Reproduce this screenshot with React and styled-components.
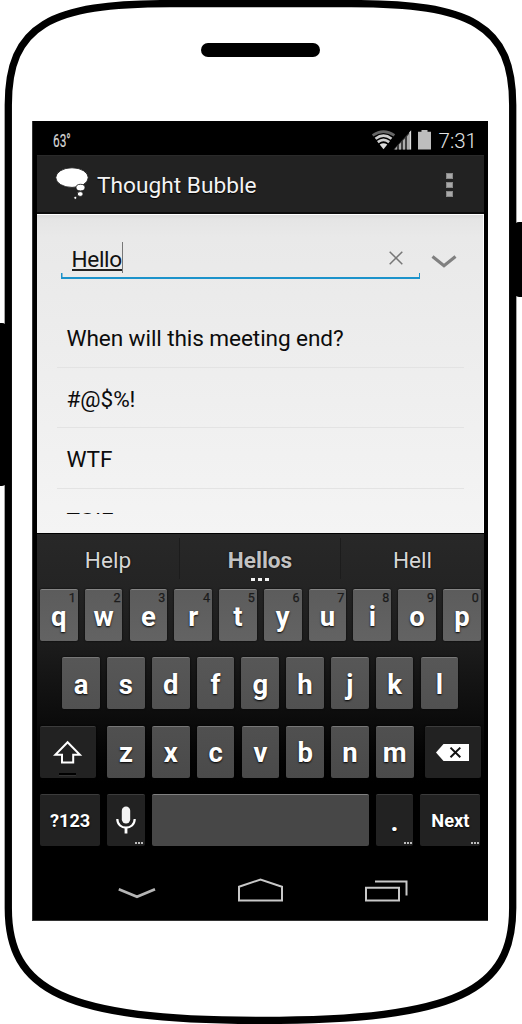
import React from "react";
import styled, { createGlobalStyle, css } from "styled-components";

const GlobalStyle = createGlobalStyle`
  * { box-sizing: border-box; }
  body { margin: 0; background: #fff; font-family: Roboto, "Liberation Sans", sans-serif; }
  svg { display: block; }
`;

const Phone = styled.main`
  position: relative;
  width: 522px;
  height: 1024px;
  padding: 121px 34px 0 32px;
  overflow: hidden;
`;

const Casing = styled.svg`
  position: absolute;
  inset: 0;
`;

const Screen = styled.section`
  position: relative;
  display: flex;
  flex-direction: column;
  height: 800px;
  padding: 1px 4px 0 4px;
  background: #000;
  border: solid #333;
  border-width: 0 0 1px 1px;
`;

const StatusBar = styled.header`
  display: flex;
  align-items: center;
  height: 33px;
  padding: 4px 8px 0 16px;
  color: #d6d6d6;
`;

const Temperature = styled.span`
  flex: 1;
  font-size: 18.5px;
  line-height: 20px;
  transform: scaleX(0.64);
  transform-origin: left;
  -webkit-text-stroke: 0.2px #d6d6d6;
`;

const Clock = styled.time`
  margin: 0 -1px 0 7px;
  font-size: 20.5px;
  line-height: 24px;
  font-weight: 300;
  color: #e4e4e4;
`;

const ActionBar = styled.div`
  display: flex;
  align-items: center;
  height: 59px;
  padding: 0 31px 0 18px;
  background: #222;
  border-top: 1px solid #2a2a2a;
  border-bottom: 2px solid #0c0c0c;
`;

const Title = styled.h1`
  flex: 1;
  margin: 3px 0 0 8px;
  font-size: 22.7px;
  line-height: 28px;
  font-weight: 400;
  color: #f3f3f3;
  text-shadow: 0 1px 1px #000;
`;

const Overflow = styled.div`
  display: flex;
  flex-direction: column;
  gap: 3px;
  padding-top: 2px;
`;

const Dot = styled.i`
  width: 7px;
  height: 6px;
  background: #a8a8a8;
  border: 1px solid #888;
`;

const Content = styled.div`
  height: 319px;
  background: linear-gradient(#dcdcdc 0, #e5e5e5 5px, #e9e9e9 22px, #ebebeb 80px, #f4f4f4 100%);
  border-top: 1px solid #fff;
  border-right: 1px solid #fff;
`;

const SearchRow = styled.div`
  display: flex;
  padding: 27px 26px 0 24px;
  height: 92px;
`;

const Field = styled.div`
  display: flex;
  flex: none;
  align-items: flex-start;
  width: 359px;
  height: 37px;
  padding: 0 17px 0 9.5px;
  border-bottom: 2px solid #1c93cb;
  background:
    linear-gradient(#1c93cb, #1c93cb) left bottom / 1.5px 4px no-repeat,
    linear-gradient(#1c93cb, #1c93cb) right bottom / 1.5px 4px no-repeat;
`;

const Typed = styled.span`
  height: 31px;
  padding: 3px 0 0 1px;
  border-right: 1px solid #777;
  font-size: 22.6px;
  line-height: 30px;
  letter-spacing: -0.35px;
  color: #111;

  u {
    display: block;
    height: 26px;
    border-bottom: 2px solid #222;
    text-decoration: none;
  }
`;

const ClearButton = styled.span`
  margin: 9px 0 0 auto;
`;

const ExpandButton = styled.span`
  margin: 13px 0 0 11px;
`;

const Phrases = styled.ul`
  height: 207px;
  margin: 0 19px 0 20px;
  padding: 0;
  overflow: hidden;
  list-style: none;
`;

const Phrase = styled.li`
  height: 60.5px;
  padding: 18px 0 0 9.5px;
  border-bottom: 1px solid #e3e3e3;
  font-size: 22.6px;
  line-height: 28px;
  letter-spacing: -0.09px;
  color: #0c0c0c;

  &:last-child {
    padding-top: 19px;
  }
`;

const Keyboard = styled.div`
  height: 315px;
  border-top: 1px solid #000;
  background: linear-gradient(#282828 0, #242424 50px, #1d1d1d 105px, #101010 165px, #020202 230px, #000 250px);
`;

const Suggestions = styled.div`
  display: grid;
  grid-template-columns: 143px 161px 143px;
  height: 55px;
  padding-top: 4px;
`;

const Suggestion = styled.div`
  position: relative;
  height: 41px;
  padding: 9px 0 0 0;
  border-right: ${(p) => (p.$last ? "none" : "1px solid #1c1c1c")};
  text-align: center;
  font-size: 22.6px;
  line-height: 28px;
  font-weight: ${(p) => (p.$strong ? 700 : 400)};
  color: ${(p) => (p.$strong ? "#c2c2c2" : "#d6d6d6")};
  text-shadow: 0 0 2px #000;
`;

const MoreDots = styled.span`
  position: absolute;
  left: ${(p) => (p.$corner ? "auto" : "71px")};
  right: ${(p) => (p.$corner ? "1.5px" : "auto")};
  bottom: ${(p) => (p.$corner ? "2.5px" : "-2px")};
  display: flex;
  gap: ${(p) => (p.$corner ? "1px" : "3px")};

  i {
    width: ${(p) => (p.$corner ? "2px" : "4px")};
    height: ${(p) => (p.$corner ? "1.5px" : "3px")};
    background: ${(p) => (p.$corner ? "#bbb" : "#f2f2f2")};
  }
`;

const KeyRow = styled.div`
  display: flex;
  gap: 7.1px;
  height: 52px;
  margin-bottom: 16.4px;
  padding-left: ${(p) => p.$indent || "3px"};
`;

const tones = {
  0: ["#5c5c5c", "#636363", "#858585"],
  1: ["#575757", "#515151", "#777"],
  2: ["#505050", "#4a4a4a", "#777"],
  3: ["#474747", "#474747", "#808080"],
};

const Key = styled.span`
  position: relative;
  display: flex;
  flex: none;
  align-items: center;
  justify-content: center;
  width: ${(p) => p.$w || 37.7}px;
  height: 52px;
  margin: 0 ${(p) => p.$after || 0}px 0 ${(p) => p.$before || 0}px;
  padding-top: ${(p) => (p.$size ? 0 : 2)}px;
  border-radius: 2px;
  font-size: ${(p) => p.$size || 27.5}px;
  line-height: 30px;
  font-weight: 700;
  color: #fff;
  text-shadow: 0 1px 2px #000;
  ${(p) =>
    p.$dark
      ? css`
          background: #222;
          border-top: 1px solid #3c3c3c;
        `
      : css`
          background: linear-gradient(${tones[p.$tone][0]}, ${tones[p.$tone][1]});
          border-top: 1px solid ${tones[p.$tone][2]};
        `}
  box-shadow: 0 0 2px #000;
`;

const Digit = styled.small`
  position: absolute;
  top: 1.5px;
  right: 2px;
  font-size: 12.5px;
  line-height: 12px;
  font-weight: 400;
  color: #1c1c1c;
  text-shadow: none;
  -webkit-text-stroke: 0.25px #1c1c1c;
`;

const ShiftLamp = styled.i`
  position: absolute;
  left: 19px;
  bottom: 2px;
  width: 17px;
  height: 3px;
  background: #000;
  border-bottom: 1px solid #333;
`;

const NavBar = styled.nav`
  display: flex;
  height: 72px;
  padding-top: 30px;
`;

const NavSlot = styled.span`
  width: ${(p) => p.$w}px;
  padding-left: ${(p) => p.$left}px;
`;

const Dots = ({ corner }) => (
  <MoreDots $corner={corner}>
    <i />
    <i />
    <i />
  </MoreDots>
);

const CasingDrawing = () => (
  <Casing width="522" height="1024" viewBox="0 0 522 1024">
    <rect x="-6" y="323" width="13" height="163" rx="5" />
    <rect x="514" y="222" width="14" height="75" rx="5" />
    <path
      d="M8.3 105C8.3 25 50 3.6 170 3.6H351C471 3.6 512.7 25 512.7 105V908C512.7 990 459 1020.3 261 1020.3C63 1020.3 8.3 990 8.3 908Z"
      fill="#fff"
      stroke="#000"
      strokeWidth="7.3"
    />
    <rect x="201" y="43" width="119" height="14" rx="7" />
  </Casing>
);

const StatusIcons = () => (
  <svg width="60" height="22" viewBox="0 0 60 22">
    <g fill="none" stroke="#cfcfcf" strokeWidth="2.7">
      <path d="M0.6 5.4Q11.5-2.2 22.4 5.4" stroke="#666" />
      <path d="M3.5 8.7Q11.5 2.6 19.5 8.7" />
      <path d="M5.8 12.1Q11.5 7.7 17.2 12.1" />
    </g>
    <path d="M7.7 14.6Q11.5 12 15.3 14.6L11.5 19.3Z" fill="#ddd" />
    <path d="M22.5 19.5H25V16.5L22.5 19.5ZM27 19.5H29V12.5L27 14.5ZM31 19.5H33V8.5L31 10.5ZM35 19.5H37V4L35 6.5Z" fill="#c8c8c8" />
    <path d="M21.5 19.5L39.5 0V19.5Z" fill="#888" opacity=".45" />
    <path d="M37.3 2.3L39 .5V19.5H37.3Z" fill="#ddd" />
    <path d="M46 1.8H49.5V0H55.5V1.8H59V19.5H46Z" fill="#bdbdbd" />
  </svg>
);

const BubbleIcon = () => (
  <svg width="34" height="34" viewBox="0 0 34 34" fill="#fff" stroke="#111" strokeWidth=".8">
    <ellipse cx="17" cy="10.6" rx="16.2" ry="9.8" />
    <ellipse cx="25.5" cy="20.6" rx="4.5" ry="3.3" />
    <ellipse cx="25.2" cy="27" rx="2.9" ry="2.4" />
    <circle cx="20.3" cy="30.8" r="1.5" />
  </svg>
);

const ClearIcon = () => (
  <svg width="14" height="14" viewBox="0 0 14 14">
    <path d="M.7.7L13.3 13.3M13.3.7L.7 13.3" stroke="#777" strokeWidth="1.5" />
  </svg>
);

const ExpandIcon = () => (
  <svg width="26" height="14" viewBox="0 0 26 14">
    <path d="M1.5 1.5L13 10.8L24.5 1.5" fill="none" stroke="#808080" strokeWidth="3.2" />
  </svg>
);

const ShiftIcon = () => (
  <svg width="30" height="26" viewBox="0 0 30 26">
    <path d="M14.6 2.2L26.9 14.8H20.2V22.5H9V14.8H2.3Z" fill="none" stroke="#fff" strokeWidth="2" />
  </svg>
);

const DeleteIcon = () => (
  <svg width="34" height="20" viewBox="0 0 34 20">
    <path d="M0 9.4L7.5 .9H33V17.9H7.5Z" fill="#fff" />
    <path d="M14.5 4.6L24.3 14.2M24.3 4.6L14.5 14.2" stroke="#111" strokeWidth="2" />
  </svg>
);

const MicIcon = () => (
  <svg width="20" height="31" viewBox="0 0 20 31">
    <rect x="5.8" y=".5" width="8.4" height="17" rx="4.2" fill="#f4f4f4" />
    <path d="M1.3 13C1.3 24.5 18.7 24.5 18.7 13" fill="none" stroke="#fff" strokeWidth="2.2" />
    <path d="M10 21V27.5" stroke="#fff" strokeWidth="2.8" />
  </svg>
);

const HideIcon = () => (
  <svg width="38" height="28" viewBox="0 0 38 28">
    <path d="M.8 11.2L19 18.7L37 11.2" fill="none" stroke="#b5b5b5" strokeWidth="2.8" />
  </svg>
);

const HomeIcon = () => (
  <svg width="46" height="28" viewBox="0 0 46 28">
    <path d="M1 8.8L22.5 1.5L44 8.8V22.5H1Z" fill="none" stroke="#c8c8c8" strokeWidth="2" />
  </svg>
);

const RecentsIcon = () => (
  <svg width="44" height="28" viewBox="0 0 44 28" fill="none" stroke="#c8c8c8" strokeWidth="2">
    <path d="M1 9.8H34V22.5H1ZM10 3.5H41.5V17.5" />
  </svg>
);

const digits = "1234567890";

export default function App() {
  return (
    <>
      <GlobalStyle />
      <Phone>
        <CasingDrawing />
        <Screen>
          <StatusBar>
            <Temperature>63°</Temperature>
            <StatusIcons />
            <Clock>7:31</Clock>
          </StatusBar>
          <ActionBar>
            <BubbleIcon />
            <Title>Thought Bubble</Title>
            <Overflow>
              <Dot />
              <Dot />
              <Dot />
            </Overflow>
          </ActionBar>
          <Content>
            <SearchRow>
              <Field>
                <Typed>
                  <u>Hello</u>
                </Typed>
                <ClearButton>
                  <ClearIcon />
                </ClearButton>
              </Field>
              <ExpandButton>
                <ExpandIcon />
              </ExpandButton>
            </SearchRow>
            <Phrases>
              <Phrase>When will this meeting end?</Phrase>
              <Phrase>#@$%!</Phrase>
              <Phrase>WTF</Phrase>
              <Phrase>TGIF</Phrase>
            </Phrases>
          </Content>
          <Keyboard>
            <Suggestions>
              <Suggestion>Help</Suggestion>
              <Suggestion $strong>
                Hellos
                <Dots />
              </Suggestion>
              <Suggestion $last>Hell</Suggestion>
            </Suggestions>
            <KeyRow>
              {[..."qwertyuiop"].map((k, i) => (
                <Key key={k} $tone={0}>
                  {k}
                  <Digit>{digits[i]}</Digit>
                </Key>
              ))}
            </KeyRow>
            <KeyRow $indent="25.3px">
              {[..."asdfghjkl"].map((k) => (
                <Key key={k} $tone={1}>
                  {k}
                </Key>
              ))}
            </KeyRow>
            <KeyRow>
              <Key $dark $w={55.5} $after={4.6}>
                <ShiftIcon />
                <ShiftLamp />
              </Key>
              {[..."zxcvbnm"].map((k) => (
                <Key key={k} $tone={2}>
                  {k}
                </Key>
              ))}
              <Key $dark $w={55.3} $before={4.6}>
                <DeleteIcon />
              </Key>
            </KeyRow>
            <KeyRow>
              <Key $dark $w={60.2} $size={18.2}>
                ?123
              </Key>
              <Key $dark $w={37.5}>
                <MicIcon />
                <Dots corner />
              </Key>
              <Key $tone={3} $w={216.8} />
              <Key $dark $w={37.5}>
                .<Dots corner />
              </Key>
              <Key $dark $w={60} $size={18.2}>
                Next
                <Dots corner />
              </Key>
            </KeyRow>
          </Keyboard>
          <NavBar>
            <NavSlot $w={201} $left={81}>
              <HideIcon />
            </NavSlot>
            <NavSlot $w={126.5}>
              <HomeIcon />
            </NavSlot>
            <NavSlot $w={50}>
              <RecentsIcon />
            </NavSlot>
          </NavBar>
        </Screen>
      </Phone>
    </>
  );
}
